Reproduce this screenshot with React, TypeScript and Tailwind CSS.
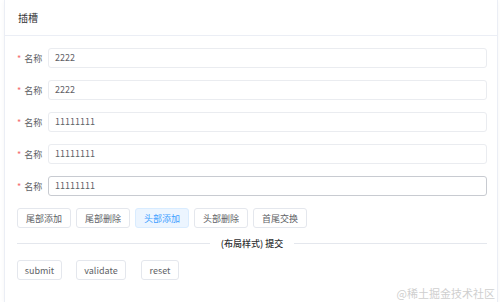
import React from "react";

const font = { fontFamily: '"Noto Sans CJK SC", "Liberation Sans", sans-serif' };

function Row({ value, hover }: { value: string; hover?: boolean }) {
  return (
    <div className="flex items-center h-[20px]">
      <div className="w-[31px] flex items-center text-[9px] text-[#606266] leading-none">
        <span className="text-[#f56c6c] mr-[3px]">*</span>
        <span>名称</span>
      </div>
      <div
        className={`flex-1 h-[20px] rounded-[3px] border flex items-center pl-[6px] text-[9px] text-[#606266] bg-white ${
          hover ? "border-[#c8cbd1]" : "border-[#eaecf0]"
        }`}
      >
        {value}
      </div>
    </div>
  );
}

function Btn({ children, active, w }: { children: React.ReactNode; active?: boolean; w: string }) {
  return (
    <div
      className={`${w} h-[20px] rounded-[3px] border flex items-center justify-center text-[9px] leading-none ${
        active
          ? "bg-[#ecf5ff] border-[#d9ecff] text-[#409eff]"
          : "bg-white border-[#e4e7ed] text-[#606266]"
      }`}
    >
      {children}
    </div>
  );
}

export default function App() {
  return (
    <div className="relative w-[500px] h-[302px] bg-white overflow-hidden" style={font}>
      <div className="ml-[4px] w-[494px] h-[302px] border-x border-[#ebeef5] bg-white shadow-[0_1px_4px_rgba(0,0,0,0.04)]">
        <div className="h-[36px] border-b border-[#ebeef5] flex items-center pl-[13px] text-[10px] text-[#303133]">
          插槽
        </div>
        <div className="pl-[12px] pr-[10px] pt-[12px] flex flex-col">
          <div className="flex flex-col gap-[12px]">
            <Row value="2222" />
            <Row value="2222" />
            <Row value="11111111" />
            <Row value="11111111" />
            <Row value="11111111" hover />
          </div>
          <div className="flex gap-[5px] mt-[12px]">
            <Btn w="w-[54px]">尾部添加</Btn>
            <Btn w="w-[54px]">尾部删除</Btn>
            <Btn w="w-[54px]" active>头部添加</Btn>
            <Btn w="w-[54px]">头部删除</Btn>
            <Btn w="w-[54px]">首尾交换</Btn>
          </div>
          <div className="flex items-center mt-[7px] h-[16px]">
            <div className="flex-1 h-px bg-[#e4e7ed]" />
            <div className="px-[11px] text-[9px] font-medium text-[#303133] leading-none">(布局样式) 提交</div>
            <div className="flex-1 h-px bg-[#e4e7ed]" />
          </div>
          <div className="flex mt-[9px]">
            <Btn w="w-[45px]">submit</Btn>
            <div className="ml-[14px]">
              <Btn w="w-[50px]">validate</Btn>
            </div>
            <div className="ml-[15px]">
              <Btn w="w-[38px]">reset</Btn>
            </div>
          </div>
        </div>
      </div>
      <div className="absolute right-[5px] bottom-[3px] text-[11px] text-[#cfcfcf] leading-none">
        @稀土掘金技术社区
      </div>
    </div>
  );
}
